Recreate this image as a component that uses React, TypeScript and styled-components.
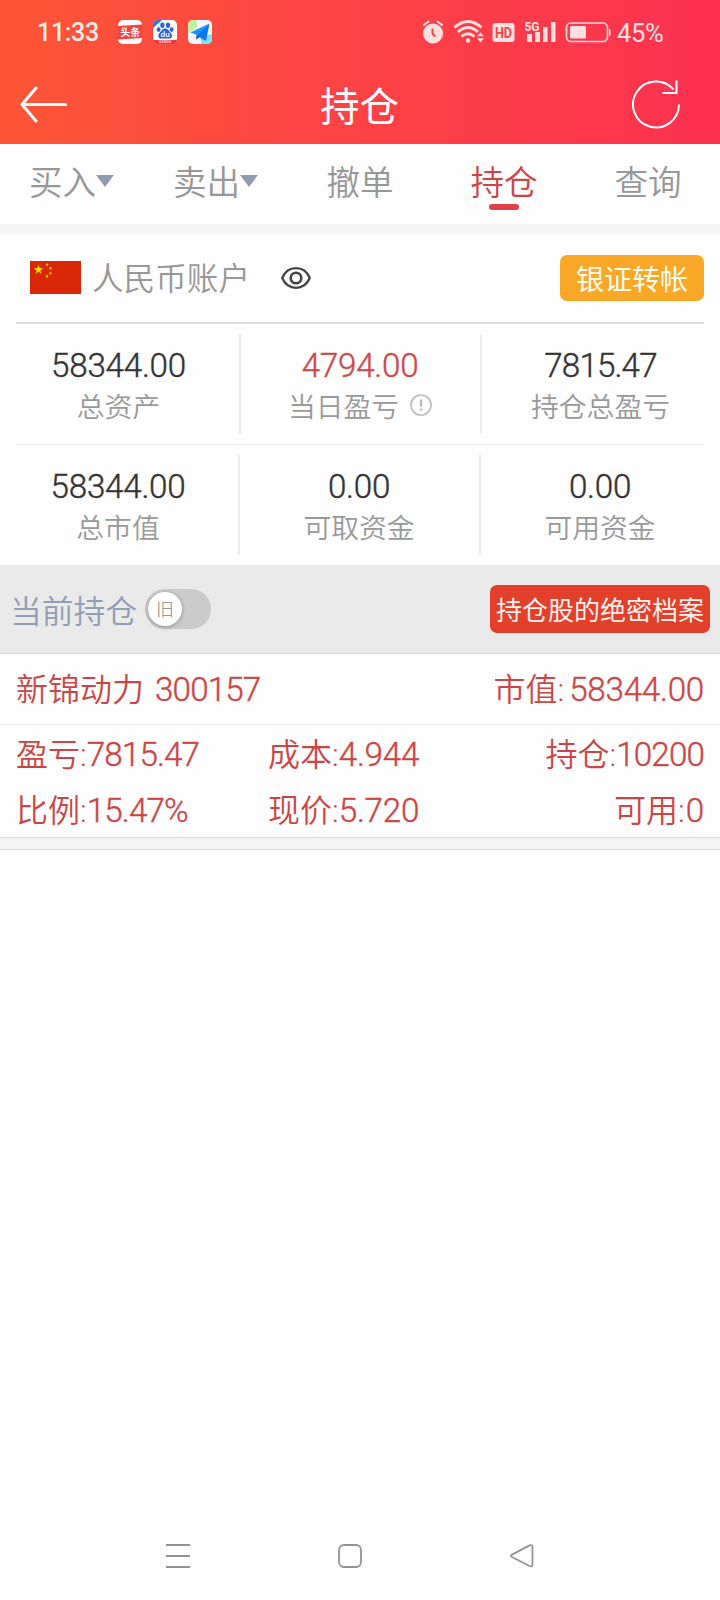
import React from "react";
import styled, { createGlobalStyle } from "styled-components";

const GlobalStyle = createGlobalStyle`
  * { box-sizing: border-box; }
  body {
    margin: 0;
    background: #fefefe;
    font-family: Roboto, "Noto Sans CJK SC", sans-serif;
    font-weight: 400;
  }
  svg { display: block; flex: none; }
`;

const Screen = styled.div`
  width: 720px;
  height: 1600px;
  display: flex;
  flex-direction: column;
  background: #fefefe;
  overflow: hidden;
`;

const Header = styled.header`
  height: 144px;
  background: linear-gradient(90deg, #fd5636 0%, #fc4444 45%, #fc3150 100%);
  color: #fff;
`;

const StatusBar = styled.div`
  height: 64px;
  padding: 0 56px 0 37px;
  display: flex;
  align-items: center;
  justify-content: space-between;
`;

const StatusGroup = styled.div`
  display: flex;
  align-items: center;
`;

const Clock = styled.span`
  width: 82px;
  padding-top: 2px;
  font: 500 25px/30px Roboto, sans-serif;
  letter-spacing: -0.3px;
  color: #ffe9e4;
`;

const AppIcons = styled.div`
  display: flex;
  gap: 11px;
  margin-left: -1px;
`;

const Battery = styled.span`
  width: 47px;
  margin-left: 6px;
  padding-top: 2px;
  font: 400 25.5px/30px Roboto, sans-serif;
  letter-spacing: -0.3px;
  color: #ffe0e2;
  white-space: nowrap;
`;

const TitleBar = styled.div`
  height: 80px;
  padding: 0 39px 0 20px;
  display: grid;
  grid-template-columns: 49px 1fr 49px;
  align-items: center;
`;

const Title = styled.h1`
  margin: 0;
  padding: 8px 0 0 18px;
  font-size: 39.5px;
  line-height: 60px;
  font-weight: 400;
  text-align: center;
`;

const Tabs = styled.nav`
  height: 90px;
  display: grid;
  grid-template-columns: repeat(5, 144px);
  border-bottom: 10px solid #f5f5f5;
`;

const Tab = styled.div<{ $active?: boolean }>`
  display: flex;
  flex-direction: column;
  align-items: center;
  padding-top: 17px;
  font-size: 33.6px;
  line-height: 46px;
  font-weight: 350;
  color: ${(p) => (p.$active ? "#cf4343" : "#979797")};
`;

const TabLabel = styled.div`
  display: flex;
  align-items: center;
  margin-left: -1px;
`;

const Caret = styled.i`
  margin-top: -6px;
  border: 9px solid transparent;
  border-top: 12px solid #8f9cb2;
  border-bottom: 0;
`;

const Indicator = styled.i`
  width: 30px;
  height: 6px;
  margin-top: -3px;
  border-radius: 3px;
  background: #e04045;
`;

const Account = styled.section`
  height: 90px;
  margin: 0 16px;
  padding-left: 14px;
  display: flex;
  align-items: center;
  border-bottom: 2px solid #dcdcdc;
`;

const AccountName = styled.span`
  width: 158px;
  margin: 0 30px 0 11px;
  padding-top: 4px;
  font-size: 31.6px;
  line-height: 44px;
  font-weight: 350;
  color: #979797;
  white-space: nowrap;
`;

const TransferButton = styled.button`
  margin-left: auto;
  width: 144px;
  height: 46px;
  padding: 5px 0 0;
  border: 0;
  border-radius: 7px;
  background: #f8a826;
  color: #fffdf0;
  font: 400 28px/41px Roboto, "Noto Sans CJK SC", sans-serif;
`;

const StatsRow = styled.div<{ $second?: boolean }>`
  height: ${(p) => (p.$second ? 120 : 121)}px;
  margin: 0 16px;
  padding: 10px 0;
  display: grid;
  grid-template-columns: ${(p) => (p.$second ? "224px 241px 1fr" : "225px 241px 1fr")};
  border-bottom: ${(p) => (p.$second ? "0" : "1px solid #eaeaea")};
`;

const Stat = styled.div`
  height: 100px;
  padding-top: 12px;
  border-right: 2px solid #ebebeb;
  display: flex;
  flex-direction: column;
  align-items: center;
  &:first-child { padding-right: 18px; }
  &:nth-child(2) { padding-right: 1px; }
  &:last-child { border-right: 0; padding-left: 15px; }
`;

const StatValue = styled.span<{ $up?: boolean }>`
  font-size: 33.2px;
  line-height: 40px;
  font-weight: 350;
  color: ${(p) => (p.$up ? "#cc4949" : "#333")};
`;

const StatLabel = styled.span`
  display: flex;
  align-items: center;
  gap: 11px;
  margin-top: 2px;
  font-size: 27.8px;
  line-height: 40px;
  font-weight: 350;
  color: #999;
  svg { margin-top: -6px; }
`;

const SectionBar = styled.div`
  height: 89px;
  padding: 0 10px 0 11px;
  display: flex;
  align-items: center;
  background: #eaeaea;
  border-bottom: 1px solid #d9d9d9;
`;

const SectionTitle = styled.h2`
  margin: 0 0 0 -1px;
  padding-top: 6px;
  width: 135px;
  font-size: 31.8px;
  line-height: 44px;
  font-weight: 350;
  color: #919eb3;
  white-space: nowrap;
`;

const Toggle = styled.div`
  width: 66px;
  height: 40px;
  padding: 3px;
  border-radius: 20px;
  background: #cbcbcb;
`;

const Knob = styled.div`
  width: 34px;
  height: 34px;
  border-radius: 50%;
  background: #fff;
  box-shadow: 0 1px 4px rgba(0, 0, 0, 0.3);
  font-size: 18px;
  line-height: 36px;
  font-weight: 300;
  text-align: center;
  color: #888;
`;

const FileButton = styled.button`
  margin-left: auto;
  width: 220px;
  height: 48px;
  padding: 4px 0 0;
  border: 0;
  border-radius: 7px;
  background: #e2402b;
  color: #fff0ec;
  font: 400 26px/44px Roboto, "Noto Sans CJK SC", sans-serif;
  white-space: nowrap;
`;

const Holding = styled.article`
  color: #ca4646;
  font-size: 32px;
  font-weight: 350;
  border-bottom: 1px solid #dcdcdc;
`;

const HoldingHead = styled.div`
  height: 71px;
  padding: 1px 16px 0;
  display: flex;
  align-items: center;
  justify-content: space-between;
  border-bottom: 1px solid #eaeaea;
`;

const HoldingGrid = styled.div`
  height: 112px;
  padding: 1px 16px 0;
  display: grid;
  grid-template-columns: 252px 1fr 1fr;
  grid-template-rows: 56px 56px;
  align-items: center;
`;

const Field = styled.span<{ $end?: boolean; $gap?: number }>`
  display: flex;
  gap: ${(p) => p.$gap ?? 0}px;
  justify-content: ${(p) => (p.$end ? "flex-end" : "flex-start")};
  line-height: 44px;
  white-space: nowrap;
`;

const Name = styled.span`
  padding-top: 1px;
`;

const Amount = styled.span`
  padding-top: 1px;
  font-size: 33.2px;
`;

const DigitRun = styled.span<{ $tracking: number }>`
  letter-spacing: ${(p) => p.$tracking}px;
  -webkit-text-stroke: 0.4px currentColor;
`;

const Strip = styled.div`
  height: 12px;
  background: #f5f5f5;
  border-bottom: 1px solid #dcdcdc;
`;

const SystemNav = styled.footer`
  margin-top: auto;
  height: 88px;
  padding: 32px 186px 0 166px;
  display: flex;
  align-items: flex-start;
  justify-content: space-between;
`;

/* Tightens a run of tabular figures that holds the narrow figure 1. */
const Digits = ({ value }: { value: string }) => (
  <DigitRun $tracking={value.includes("1") ? -0.85 : -0.25}>{value}</DigitRun>
);

const HeadlinesIcon = () => (
  <svg width="24" height="24" viewBox="0 0 24 24">
    <rect width="24" height="24" rx="5" fill="#fff" />
    <path d="M0 6 24 4.500V18L0 19.500Z" fill="#f5413f" />
    <text x="2.200" y="16" fontSize="10" fontWeight="700" fill="#fff" fontFamily="Noto Sans CJK SC">头条</text>
  </svg>
);

const PawIcon = () => (
  <svg width="24" height="24" viewBox="0 0 24 24">
    <rect width="24" height="24" rx="5" fill="#fff" />
    <path d="M5 0H9L0 8V5a5 5 0 0 1 5-5Z" fill="#2f6fe0" />
    <g fill="#2b63d6">
      <ellipse cx="9.400" cy="5.300" rx="2.100" ry="2.700" />
      <ellipse cx="15" cy="5.300" rx="2.100" ry="2.700" />
      <ellipse cx="5.600" cy="9.600" rx="1.900" ry="2.400" />
      <ellipse cx="18.600" cy="9.600" rx="1.900" ry="2.400" />
      <path d="M12.200 8.500c3 0 3.500 2.500 5.400 4.200 2.500 2.300 1.600 5.800-1.600 5.800H8.300c-3.200 0-4-3.500-1.600-5.800 2-1.700 2.500-4.200 5.500-4.200Z" />
    </g>
    <text x="7.600" y="17.300" fontSize="8" fontWeight="700" fill="#fff" fontFamily="Lato">du</text>
    <path d="M0 19.800Q12 21 24 19.800A5 5 0 0 1 19 24H5a5 5 0 0 1-5-4.200Z" fill="#ee3340" />
    <path d="M6 22h12" stroke="#fff" strokeWidth="1.500" strokeDasharray="2 .5" opacity=".75" />
  </svg>
);

const MapIcon = () => (
  <svg width="24" height="24" viewBox="0 0 24 24">
    <rect width="24" height="24" rx="5" fill="#f3f7fa" />
    <path d="M5 0h4v7L0 14V5a5 5 0 0 1 5-5Z" fill="#c0f3a0" />
    <path d="M13 17l11-3v5a5 5 0 0 1-5 5h-6Z" fill="#7fe0ff" />
    <path d="M21.500 3.500 2.500 12.500l6 2.200Z" fill="#1a90ff" />
    <path d="M21.500 3.500 8.500 14.700 12 17.500l6 3.500Z" fill="#0878f5" />
    <path d="M8.500 14.700 8 19.500l4-2.500Z" fill="#0652c4" />
  </svg>
);

const StatusIcons = () => (
  <svg width="188" height="26" viewBox="0 0 188 26" fill="#ffe0e0">
    <circle cx="10" cy="14.500" r="10" />
    <path d="M1 6 5.500 2.500M19 6 14.500 2.500" stroke="#ffe0e0" strokeWidth="2" strokeLinecap="round" />
    <path d="M9.500 9.500v5l2.800 3" fill="none" stroke="#fb4247" strokeWidth="2" />
    <g fill="none" stroke="#ffe0e0" strokeWidth="2.900">
      <path d="M31.500 8.500Q45-3.500 58.500 8.500" />
      <path d="M35 13Q45 4 55 13" />
      <path d="M38.500 17.500Q45 12 51.500 17.500" />
    </g>
    <circle cx="45" cy="21.500" r="2.200" />
    <path d="M54 17.200h7L57.500 13.500ZM54 19.300h7L57.500 23.500Z" />
    <rect x="69.500" y="4" width="22" height="19" rx="3" />
    <text x="72" y="18.800" fontSize="14.500" fontWeight="700" fill="#fb4048" fontFamily="Roboto" textLength="17" lengthAdjust="spacingAndGlyphs">HD</text>
    <text x="101.500" y="11.500" fontSize="13" fontWeight="700" fontFamily="Roboto" textLength="15" lengthAdjust="spacingAndGlyphs">5G</text>
    <path d="M104 15h5v8h-5ZM112 13h5v10h-5ZM120 8h4.500v15H120ZM128 3h4.500v20H128Z" />
    <rect x="143.500" y="4" width="41" height="18.500" rx="4.500" fill="none" stroke="#ffd6d9" strokeWidth="1.700" />
    <rect x="147" y="7" width="16" height="12.500" rx="1.500" />
    <rect x="186" y="10" width="1.500" height="7" rx=".7" />
  </svg>
);

const BackIcon = () => (
  <svg width="49" height="38" viewBox="0 0 49 38" fill="none" stroke="#fff" strokeWidth="3" strokeLinecap="round" strokeLinejoin="round">
    <path d="M16 3 2 19.500 16 36M2 19.500h43.500" />
  </svg>
);

const RefreshIcon = () => (
  <svg width="49" height="50" viewBox="0 0 49 50" fill="none" stroke="#fff" strokeWidth="2">
    <path d="M47 25.500A23 23 0 1 1 41.500 10.500" />
    <path d="M44.500 1.500V14H30.500" />
  </svg>
);

const Star = ({ x, y, r, turn = 0 }: { x: number; y: number; r: number; turn?: number }) => (
  <path
    transform={`translate(${x} ${y}) rotate(${turn}) scale(${r})`}
    d="M0-1 .225-.309H.951L.363.118.588.809 0 .382-.588.809-.363.118-.951-.309H-.225Z"
    fill="#fde000"
  />
);

const Flag = () => (
  <svg width="51" height="35" viewBox="0 0 51 35">
    <rect width="51" height="33" fill="#d92807" />
    <Star x={8.5} y={8.8} r={5} />
    <Star x={17} y={3.7} r={1.9} turn={20} />
    <Star x={20.5} y={7.3} r={1.9} turn={40} />
    <Star x={20.5} y={12.3} r={1.9} />
    <Star x={17} y={15.3} r={1.9} turn={20} />
  </svg>
);

const EyeIcon = () => (
  <svg width="32" height="24" viewBox="0 0 32 24" fill="none" stroke="#444" strokeWidth="2.300">
    <path d="M2.200 12C5 5.500 10 2.200 16 2.200S27 5.500 29.800 12C27 18.500 22 21.800 16 21.800S5 18.500 2.200 12Z" />
    <circle cx="16" cy="12" r="5.300" strokeWidth="2.600" />
  </svg>
);

const InfoIcon = () => (
  <svg width="22" height="22" viewBox="0 0 22 22" fill="none" stroke="#bbb">
    <circle cx="11" cy="11" r="10" strokeWidth="1.700" />
    <path d="M11 5.500v7M11 14.500v2.200" strokeWidth="2.300" />
  </svg>
);

const MenuIcon = () => (
  <svg width="24" height="24" viewBox="0 0 24 24" stroke="#939393" strokeWidth="2">
    <path d="M0 1h24M0 12h24M0 23h24" />
  </svg>
);

const HomeIcon = () => (
  <svg width="24" height="24" viewBox="0 0 24 24" fill="none" stroke="#939393" strokeWidth="1.800">
    <rect x="1" y="1" width="22" height="22" rx="5" />
  </svg>
);

const ReturnIcon = () => (
  <svg width="24" height="24" viewBox="0 0 24 24" fill="none" stroke="#939393" strokeWidth="1.800">
    <path d="M2 10.600 19.500 1.400Q22.500.3 22.500 3V20.500Q22.500 23.200 19.500 22L2 13Q-.2 11.800 2 10.600Z" />
  </svg>
);

export default function App() {
  return (
    <Screen>
      <GlobalStyle />
      <Header>
        <StatusBar>
          <StatusGroup>
            <Clock>11:33</Clock>
            <AppIcons>
              <HeadlinesIcon />
              <PawIcon />
              <MapIcon />
            </AppIcons>
          </StatusGroup>
          <StatusGroup>
            <StatusIcons />
            <Battery>45%</Battery>
          </StatusGroup>
        </StatusBar>
        <TitleBar>
          <BackIcon />
          <Title>持仓</Title>
          <RefreshIcon />
        </TitleBar>
      </Header>

      <Tabs>
        <Tab><TabLabel>买入<Caret /></TabLabel></Tab>
        <Tab><TabLabel>卖出<Caret /></TabLabel></Tab>
        <Tab>撤单</Tab>
        <Tab $active>持仓<Indicator /></Tab>
        <Tab>查询</Tab>
      </Tabs>

      <Account>
        <Flag />
        <AccountName>人民币账户</AccountName>
        <EyeIcon />
        <TransferButton>银证转帐</TransferButton>
      </Account>

      <StatsRow>
        <Stat><StatValue><Digits value="58344.00" /></StatValue><StatLabel>总资产</StatLabel></Stat>
        <Stat><StatValue $up><Digits value="4794.00" /></StatValue><StatLabel>当日盈亏<InfoIcon /></StatLabel></Stat>
        <Stat><StatValue><Digits value="7815.47" /></StatValue><StatLabel>持仓总盈亏</StatLabel></Stat>
      </StatsRow>
      <StatsRow $second>
        <Stat><StatValue><Digits value="58344.00" /></StatValue><StatLabel>总市值</StatLabel></Stat>
        <Stat><StatValue><Digits value="0.00" /></StatValue><StatLabel>可取资金</StatLabel></Stat>
        <Stat><StatValue><Digits value="0.00" /></StatValue><StatLabel>可用资金</StatLabel></Stat>
      </StatsRow>

      <SectionBar>
        <SectionTitle>当前持仓</SectionTitle>
        <Toggle><Knob>旧</Knob></Toggle>
        <FileButton>持仓股的绝密档案</FileButton>
      </SectionBar>

      <Holding>
        <HoldingHead>
          <Field $gap={11}><Name>新锦动力</Name><Amount><Digits value="300157" /></Amount></Field>
          <Field $end $gap={5}><Name>市值:</Name><Amount><Digits value="58344.00" /></Amount></Field>
        </HoldingHead>
        <HoldingGrid>
          <Field><Name>盈亏:</Name><Amount><Digits value="7815.47" /></Amount></Field>
          <Field><Name>成本:</Name><Amount><Digits value="4.944" /></Amount></Field>
          <Field $end><Name>持仓:</Name><Amount><Digits value="10200" /></Amount></Field>
          <Field><Name>比例:</Name><Amount><Digits value="15.47%" /></Amount></Field>
          <Field><Name>现价:</Name><Amount><Digits value="5.720" /></Amount></Field>
          <Field $end $gap={1}><Name>可用:</Name><Amount><Digits value="0" /></Amount></Field>
        </HoldingGrid>
      </Holding>
      <Strip />

      <SystemNav>
        <MenuIcon />
        <HomeIcon />
        <ReturnIcon />
      </SystemNav>
    </Screen>
  );
}
